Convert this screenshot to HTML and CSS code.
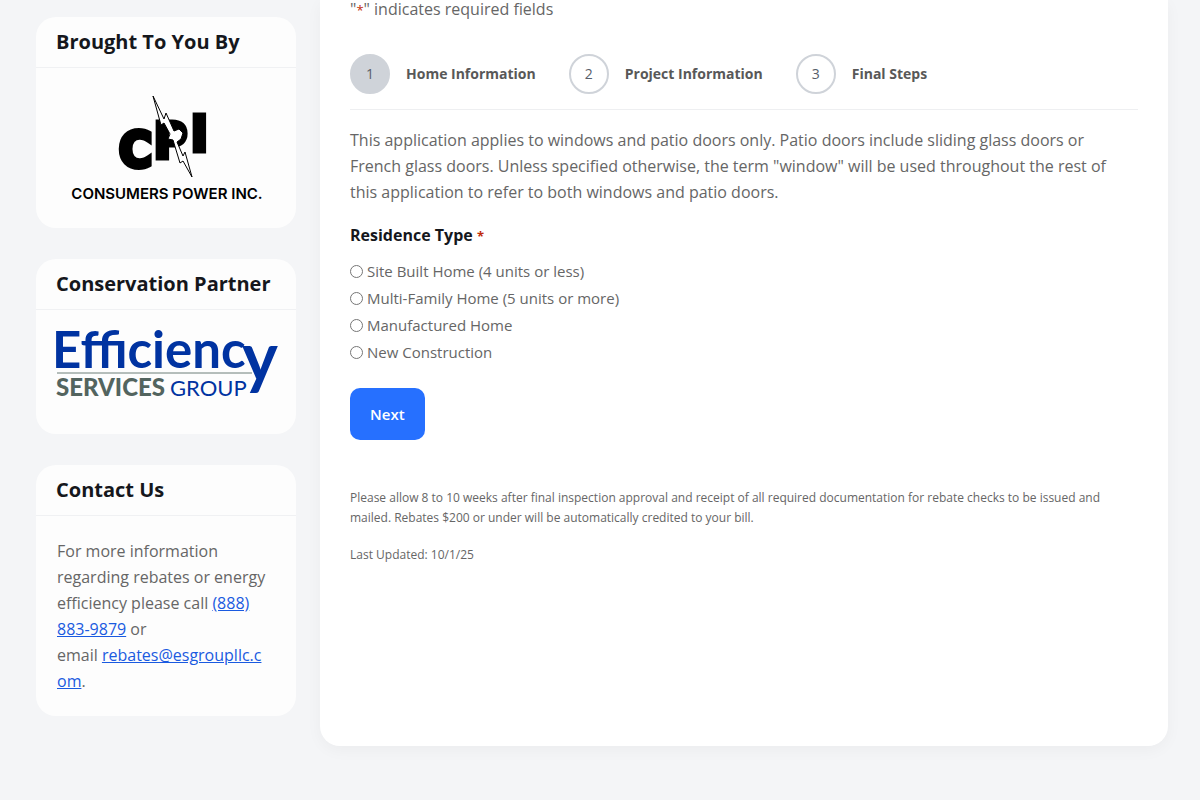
FILE: index.html
```html
<!DOCTYPE html>
<html lang="en">
<head>
    <meta charset="UTF-8">
    <meta name="viewport" content="width=device-width, initial-scale=1.0">
    <title>Window Rebate Application</title>
    <link rel="stylesheet" href="styles.css">
</head>
<body>
    <div class="page">
        <aside class="sidebar">
            <section class="card">
                <h2>Brought To You By</h2>
                <div class="card-body">
                    <svg class="logo" viewBox="0 0 220 120" role="img" aria-label="Consumers Power Inc.">
                        <g class="cpi-letters">
                            <text x="63" y="79">C</text>
                            <text x="98" y="70">P</text>
                            <text x="135" y="63">I</text>
                        </g>
                        <path class="bolt" d="M97 8 L108 31 L110 25 L118 43 L123 41 L127 45 L125 51 L121 54 L127 68 L129 64 L136 89 L127 73 L124 75 L117 52 L112 51 L114 46 L108 35 L105 37 Z"/>
                        <text class="cpi-name" x="111" y="111" text-anchor="middle">CONSUMERS POWER INC.</text>
                    </svg>
                </div>
            </section>

            <section class="card">
                <h2>Conservation Partner</h2>
                <div class="card-body">
                    <svg class="logo" viewBox="0 0 220 84" role="img" aria-label="Efficiency Services Group">
                        <text class="esg-main" x="-4" y="38">Efficienc</text>
                        <text class="esg-y" x="186" y="51">y</text>
                        <path class="esg-rule" d="M1 43H196"/>
                        <text class="esg-services" x="0" y="66">SERVICES</text>
                        <text class="esg-group" x="114" y="66">GROUP</text>
                    </svg>
                </div>
            </section>

            <section class="card">
                <h2>Contact Us</h2>
                <div class="card-body contact">
                    <p>For more information regarding rebates or energy efficiency please call <a href="tel:8888839879">(888) 883-9879</a> or email&nbsp;<a href="mailto:rebates@esgroupllc.com">rebates@esgroupllc.com</a>.</p>
                </div>
            </section>
        </aside>

        <main class="content">
            <p class="indicates">"<span class="required">*</span>" indicates required fields</p>
            <form id="rebateForm">
                <ol class="steps">
                    <li class="active"><span class="number">1</span><span class="label">Home Information</span></li>
                    <li><span class="number">2</span><span class="label">Project Information</span></li>
                    <li><span class="number">3</span><span class="label">Final Steps</span></li>
                </ol>

                <p class="intro">This application applies to windows and patio doors only. Patio doors include sliding glass doors or French glass doors. Unless specified otherwise, the term "window" will be used throughout the rest of this application to refer to both windows and patio doors.</p>

                <fieldset>
                    <legend>Residence Type <span class="required">*</span></legend>
                    <div class="choice">
                        <input type="radio" id="site_built" name="residence" value="site_built">
                        <label for="site_built">Site Built Home (4 units or less)</label>
                    </div>
                    <div class="choice">
                        <input type="radio" id="multi_family" name="residence" value="multi_family">
                        <label for="multi_family">Multi-Family Home (5 units or more)</label>
                    </div>
                    <div class="choice">
                        <input type="radio" id="manufactured" name="residence" value="manufactured">
                        <label for="manufactured">Manufactured Home</label>
                    </div>
                    <div class="choice">
                        <input type="radio" id="new_construction" name="residence" value="new_construction">
                        <label for="new_construction">New Construction</label>
                    </div>
                </fieldset>

                <button type="button">Next</button>
            </form>

            <div class="notes">
                <p>Please allow 8 to 10 weeks after final inspection approval and receipt of all required documentation for rebate checks to be issued and mailed. Rebates $200 or under will be automatically credited to your bill.</p>
                <p>Last Updated: 10/1/25</p>
            </div>
        </main>
    </div>
</body>
</html>
```
FILE: styles.css
```css
* {
    box-sizing: border-box;
}
body {
    margin: 0;
    font-family: "Open Sans", "Noto Sans", sans-serif;
    font-size: 16px;
    line-height: 26px;
    color: #666;
    background: #f4f5f7;
}
p {
    margin: 0;
}
.page {
    display: grid;
    grid-template-columns: 260px 1fr;
    gap: 24px;
    padding: 0 32px 54px 36px;
}
.sidebar {
    display: flex;
    flex-direction: column;
    gap: 31px;
    padding-top: 17px;
}
.card {
    background: #fdfdfd;
    border-radius: 20px;
}
.card h2 {
    margin: 0;
    padding: 12px 20px;
    border-bottom: 1px solid #f0f1f3;
    font-size: 20px;
    font-weight: 700;
    line-height: 26px;
    color: #15171c;
}
.card-body {
    padding: 20px;
}
.logo {
    display: block;
    width: 100%;
    overflow: visible;
}
.cpi-letters {
    font-family: "DejaVu Sans Condensed", "DejaVu Sans", sans-serif;
    font-size: 50px;
    font-weight: 700;
    fill: #000;
    stroke: #000;
    stroke-width: 5;
}
.bolt {
    fill: #fff;
    stroke: #000;
}
.cpi-name {
    font-family: Inter, sans-serif;
    font-size: 15px;
    font-weight: 600;
    fill: #000;
}
.esg-main,
.esg-y {
    font-family: Lato, sans-serif;
    font-size: 51px;
    font-weight: 700;
    fill: #0033a1;
}
.esg-y {
    font-size: 68px;
}
.esg-rule {
    stroke: #6d7f78;
}
.esg-services,
.esg-group {
    font-family: Lato, sans-serif;
    font-size: 22px;
    fill: #0033a1;
}
.esg-services {
    font-size: 24px;
    font-weight: 900;
    fill: #53645f;
}
.contact {
    padding: 22px 27px 22px 21px;
}
.contact p {
    overflow-wrap: anywhere;
}
a {
    color: #1a5ae0;
}
.content {
    min-height: 746px;
    padding: 0 30px 30px;
    background: #fff;
    border-radius: 0 0 20px 20px;
    box-shadow: 0 4px 16px rgba(0, 0, 0, 0.04);
}
.indicates {
    margin: -4px 0 31px;
}
.required {
    color: #c02b0a;
    font-size: 13px;
}
.steps {
    display: flex;
    flex-wrap: wrap;
    gap: 33px;
    margin: 0 0 17px;
    padding: 0 0 15px;
    border-bottom: 1px solid #eeeff1;
    list-style: none;
}
.steps li {
    display: flex;
    align-items: center;
    gap: 16px;
}
.steps .number {
    display: flex;
    align-items: center;
    justify-content: center;
    width: 40px;
    height: 40px;
    border: 2px solid #cfd3d9;
    border-radius: 50%;
    font-size: 14px;
    color: #585e6a;
}
.steps .active .number {
    background: #cfd3d9;
}
.steps .label {
    font-size: 14px;
    font-weight: 700;
    color: #585858;
}
.intro {
    padding-right: 16px;
}
fieldset {
    margin: 17px 0 22px;
    padding: 0;
    border: 0;
}
legend {
    padding: 0;
    margin-bottom: 9px;
    font-weight: 700;
    color: #15171c;
}
.choice {
    display: flex;
    align-items: center;
    gap: 4px;
    font-size: 15px;
    line-height: 27px;
}
.choice input {
    width: 13px;
    height: 13px;
    margin: 0;
}
button {
    padding: 13px 20px;
    border: none;
    border-radius: 10px;
    background: #2670ff;
    color: #fff;
    font-family: inherit;
    font-size: 15px;
    font-weight: 600;
    line-height: 26px;
    cursor: pointer;
}
.notes {
    margin-top: 48px;
    font-size: 12px;
    line-height: 20px;
}
.notes p {
    margin-bottom: 17px;
}
```
